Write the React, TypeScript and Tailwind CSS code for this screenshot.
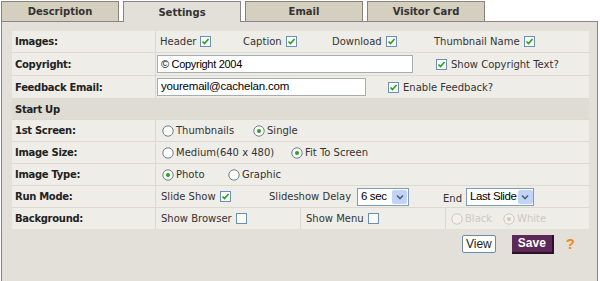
import React from 'react'

const font = { fontFamily: '"DejaVu Sans", Verdana, sans-serif' }
const arial = { fontFamily: '"Liberation Sans", Arial, sans-serif' }

function Check({ on = true }: { on?: boolean }) {
  return (
    <svg width="11" height="11" viewBox="0 0 11 11" className="inline-block shrink-0">
      <rect x="0.5" y="0.5" width="10" height="10" fill="#fbfbf8" stroke="#6d8fb4" />
      {on && <path d="M2.5 5.5 L4.5 7.5 L8.5 3" fill="none" stroke="#21a121" strokeWidth="1.6" />}
    </svg>
  )
}

function Radio({ on = false, disabled = false }: { on?: boolean; disabled?: boolean }) {
  return (
    <svg width="12" height="12" viewBox="0 0 12 12" className="inline-block shrink-0">
      <circle cx="6" cy="6" r="5.2" fill={disabled ? '#f3f1ec' : '#fbfbf8'} stroke={disabled ? '#cdcac2' : '#6e7f8e'} />
      {on && <circle cx="6" cy="6" r="2" fill={disabled ? '#cdcac2' : '#2aa12a'} />}
    </svg>
  )
}

function Select({ value, w }: { value: string; w: string }) {
  return (
    <div className={`flex h-[18px] items-center border border-[#7f9db9] bg-white ${w}`}>
      <span className="flex-1 whitespace-nowrap pl-[3px] text-[11.5px] tracking-[-0.4px] text-black" style={arial}>
        {value}
      </span>
      <span className="m-px flex h-[14px] w-[15px] shrink-0 items-center justify-center rounded-[2px] bg-[#c3d3f6]">
        <svg width="8" height="6" viewBox="0 0 8 6">
          <path d="M1 1.5 L4 4.5 L7 1.5" fill="none" stroke="#4d6185" strokeWidth="1.6" />
        </svg>
      </span>
    </div>
  )
}

function Row({ label, h = 'h-[21px]', children }: { label: string; h?: string; children?: React.ReactNode }) {
  return (
    <div className={`flex gap-px ${h}`}>
      <div className="flex w-[143px] items-center bg-[#efede8] pl-[3px] text-[10px] font-bold tracking-[-0.3px] text-[#222]">
        {label}
      </div>
      <div className="flex flex-1 items-center whitespace-nowrap bg-[#efede8] text-[10px] text-[#333]">{children}</div>
    </div>
  )
}

export default function App() {
  const tabs = ['Description', 'Settings', 'Email', 'Visitor Card']
  return (
    <div className="h-[281px] w-[600px] overflow-hidden bg-white" style={font}>
      {/* Tabs */}
      <div className="flex h-[21px] items-end gap-[4px] pl-px">
        {tabs.map((t) =>
          t === 'Settings' ? (
            <div
              key={t}
              className="relative z-10 -mb-px flex h-[21px] w-[118px] items-center justify-center border border-b-0 border-[#8d8289] bg-[#e3e0da] text-[10px] font-bold text-[#333]"
            >
              {t}
            </div>
          ) : (
            <div
              key={t}
              className="flex h-[20px] w-[118px] items-center justify-center border border-b-0 border-[#8a8375] bg-[#d5cfbf] text-[10px] font-bold text-[#333]"
            >
              {t}
            </div>
          )
        )}
      </div>

      {/* Panel */}
      <div className="ml-px h-[280px] w-[597px] border border-[#8d8289] bg-[#e3e0da] pl-[10px] pr-[8px] pt-[9px]">
        <div className="flex flex-col gap-px bg-[#dcd9d1]">
          <Row label="Images:">
            <span className="flex w-[87px] items-center gap-[4px] pl-[4px]">Header <Check /></span>
            <span className="flex w-[89px] items-center gap-[4px]">Caption <Check /></span>
            <span className="flex w-[102px] items-center gap-[4px]">Download <Check /></span>
            <span className="flex items-center gap-[4px]">Thumbnail Name <Check /></span>
          </Row>
          <Row label="Copyright:" h="h-[22px]">
            <div
              className="ml-px flex h-[18px] w-[256px] items-center border border-[#a5acb2] bg-white pl-[3px] text-[11px] tracking-[-0.3px] text-black"
              style={arial}
            >
              © Copyright 2004
            </div>
            <span className="ml-[23px] flex items-center gap-[4px]"><Check /> Show Copyright Text?</span>
          </Row>
          <Row label="Feedback Email:" h="h-[22px]">
            <div
              className="ml-px flex h-[18px] w-[209px] items-center border border-[#a5acb2] bg-white pl-[3px] text-[11.5px] tracking-[-0.2px] text-black"
              style={arial}
            >
              youremail@cachelan.com
            </div>
            <span className="ml-[22px] flex items-center gap-[4px]"><Check /> Enable Feedback?</span>
          </Row>
          <div className="flex h-[20px] items-center bg-[#dfdcd4] pl-[3px] text-[10px] font-bold tracking-[-0.3px] text-[#222]">Start Up</div>
          <Row label="1st Screen:">
            <span className="flex w-[97px] items-center gap-[2px] pl-[6px]"><Radio /> Thumbnails</span>
            <span className="flex items-center gap-[2px]"><Radio on /> Single</span>
          </Row>
          <Row label="Image Size:">
            <span className="flex w-[135px] items-center gap-[2px] pl-[6px]"><Radio /> Medium(640 x 480)</span>
            <span className="flex items-center gap-[2px]"><Radio on /> Fit To Screen</span>
          </Row>
          <Row label="Image Type:">
            <span className="flex w-[72px] items-center gap-[2px] pl-[6px]"><Radio on /> Photo</span>
            <span className="flex items-center gap-[2px]"><Radio /> Graphic</span>
          </Row>
          <Row label="Run Mode:">
            <span className="flex w-[113px] items-center gap-[4px] pl-[5px]">Slide Show <Check /></span>
            <span className="flex w-[88px] items-center">Slideshow Delay</span>
            <Select value="6 sec" w="w-[52px]" />
            <span className="ml-[34px] mr-[4px] mt-[3px]">End</span>
            <Select value="Last Slide" w="w-[68px]" />
          </Row>
          <div className="flex h-[21px] gap-px whitespace-nowrap text-[10px] text-[#333]">
            <div className="flex w-[143px] items-center bg-[#efede8] pl-[3px] font-bold tracking-[-0.3px] text-[#222]">Background:</div>
            <div className="flex w-[144px] items-center gap-[4px] bg-[#efede8] pl-[5px]">Show Browser <Check on={false} /></div>
            <div className="flex w-[144px] items-center gap-[4px] bg-[#efede8] pl-[5px]">Show Menu <Check on={false} /></div>
            <div className="flex flex-1 items-center bg-[#efede8] pl-[5px] text-[#cdcac2]">
              <span className="flex w-[52px] items-center gap-[2px]"><Radio disabled /> Black</span>
              <span className="flex items-center gap-[2px]"><Radio on disabled /> White</span>
            </div>
          </div>
        </div>

        {/* Buttons */}
        <div className="mt-[4px] flex items-center justify-end pr-[14px]">
          <button
            className="flex h-[18px] w-[34px] items-center justify-center rounded-[2px] border border-[#6f8aa6] bg-white text-[12px] text-[#222]"
            style={arial}
          >
            View
          </button>
          <button
            className="ml-[16px] flex h-[19px] w-[42px] items-center justify-center border-b-2 border-r-2 border-[#2b1029] bg-[#5c2858] text-[12px] font-bold text-white"
            style={arial}
          >
            Save
          </button>
          <span className="ml-[12px] text-[15px] font-bold text-[#f08a1c]" style={arial}>
            ?
          </span>
        </div>
      </div>
    </div>
  )
}
